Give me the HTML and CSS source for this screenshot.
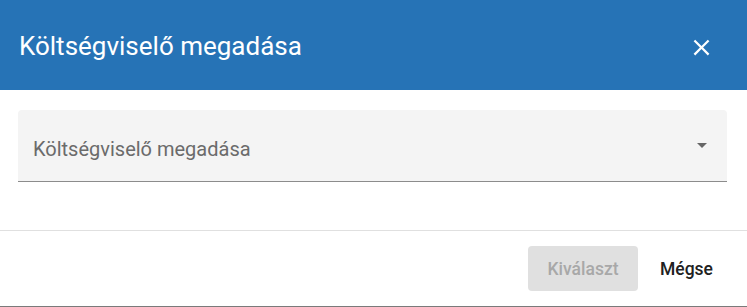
FILE: index.html
```html
<!DOCTYPE html>
<html lang="hu">
<head>
    <meta charset="UTF-8">
    <meta name="viewport" content="width=device-width, initial-scale=1.0">
    <title>Költségviselő megadása</title>
    <link rel="stylesheet" href="styles.css">
</head>
<body>
    <div class="dialog">
        <div class="dialog-header">
            <h2>Költségviselő megadása</h2>
            <button class="close-btn" aria-label="Bezár">
                <svg width="27" height="27" viewBox="0 0 24 24">
                    <path d="M19 6.41 17.59 5 12 10.59 6.41 5 5 6.41 10.59 12 5 17.59 6.41 19 12 13.41 17.59 19 19 17.59 13.41 12z" fill="#fff"/>
                </svg>
            </button>
        </div>

        <div class="dialog-body">
            <div class="select-field">
                <span class="select-label">Költségviselő megadása</span>
                <span class="select-arrow"></span>
            </div>
        </div>

        <div class="dialog-footer">
            <button class="btn btn-primary" disabled>Kiválaszt</button>
            <button class="btn btn-text">Mégse</button>
        </div>
    </div>
</body>
</html>
```

FILE: styles.css
```css
* {
    box-sizing: border-box;
    margin: 0;
    padding: 0;
}

body {
    font-family: Roboto, "Liberation Sans", Arial, sans-serif;
    background-color: #ffffff;
    width: 747px;
    height: 307px;
    overflow: hidden;
}

.dialog {
    height: 307px;
    border-bottom: 1px solid #7a7a7a;
    display: flex;
    flex-direction: column;
}

.dialog-header {
    height: 90px;
    background-color: #2673b6;
    display: flex;
    align-items: center;
    justify-content: space-between;
    padding: 0 32px 0 19px;
}

.dialog-header h2 {
    font-size: 26px;
    font-weight: 400;
    color: #ffffff;
    padding-top: 2px;
}

.close-btn {
    background: none;
    border: none;
    cursor: pointer;
    display: flex;
    padding: 0;
    margin-top: 4px;
}

.dialog-body {
    padding: 20px 20px 48px 18px;
    border-bottom: 1px solid #e0e0e0;
}

.select-field {
    height: 72px;
    background-color: #f4f4f4;
    border-radius: 4px 4px 0 0;
    border-bottom: 1px solid #8c8c8c;
    display: flex;
    align-items: center;
    justify-content: space-between;
    padding: 6px 20px 0 15px;
}

.select-label {
    font-size: 20px;
    color: #6b6b6b;
}

.select-arrow {
    width: 0;
    height: 0;
    border-left: 5px solid transparent;
    border-right: 5px solid transparent;
    border-top: 5px solid #666666;
    margin-bottom: 6px;
}

.dialog-footer {
    flex: 1;
    display: flex;
    align-items: center;
    justify-content: flex-end;
    gap: 12px;
    padding: 0 24px 0 0;
}

.btn {
    font-family: Roboto, "Liberation Sans", Arial, sans-serif;
    font-size: 17.5px;
    font-weight: 500;
    height: 45px;
    border: none;
    border-radius: 4px;
    background: none;
    cursor: pointer;
}

.btn-primary {
    width: 110px;
    background-color: #e0e0e0;
    color: #a8a8a8;
}

.btn-primary:disabled {
    cursor: default;
}

.btn-text {
    padding: 0 10px;
    color: #212121;
}
```
